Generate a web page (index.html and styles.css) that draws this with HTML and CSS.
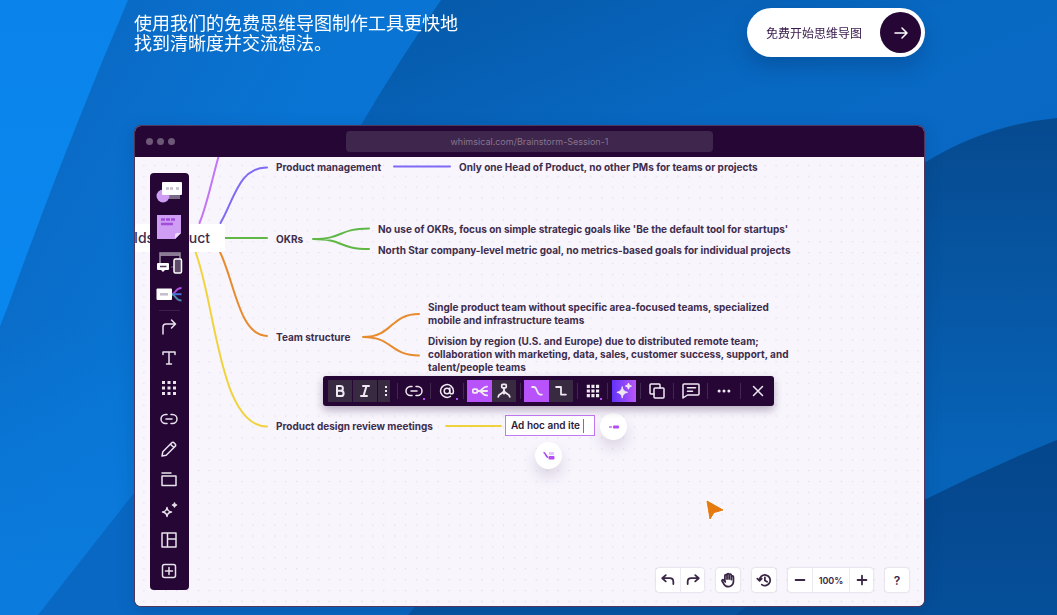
FILE: index.html
```html
<!DOCTYPE html>
<html lang="zh-CN">
<head>
<meta charset="utf-8">
<meta name="viewport" content="width=device-width, initial-scale=1">
<title>免费思维导图</title>
<link rel="stylesheet" href="styles.css">
</head>
<body>
<svg class="backdrop" viewBox="0 0 1057 615" preserveAspectRatio="none" aria-hidden="true">
  <defs>
    <linearGradient id="g1" x1="0" y1="0" x2="0" y2="1"><stop offset="0" stop-color="#0a84ea"/><stop offset="1" stop-color="#0a8af4"/></linearGradient>
    <linearGradient id="g2" gradientUnits="userSpaceOnUse" x1="90" y1="80" x2="260" y2="180"><stop offset="0" stop-color="#0a6bc6"/><stop offset="1" stop-color="#0974d3"/></linearGradient>
    <linearGradient id="g2b" gradientUnits="userSpaceOnUse" x1="0" y1="320" x2="0" y2="615"><stop offset="0" stop-color="#0a7bdc" stop-opacity="0"/><stop offset="1" stop-color="#0b7cde"/></linearGradient>
    <linearGradient id="g3" gradientUnits="userSpaceOnUse" x1="480" y1="0" x2="620" y2="330"><stop offset="0" stop-color="#065bac"/><stop offset=".55" stop-color="#0869c3"/><stop offset="1" stop-color="#0968c4"/></linearGradient>
    <linearGradient id="g4" gradientUnits="userSpaceOnUse" x1="0" y1="118" x2="0" y2="460"><stop offset="0" stop-color="#064a8f"/><stop offset="1" stop-color="#0763b8"/></linearGradient>
    <linearGradient id="g5" gradientUnits="userSpaceOnUse" x1="0" y1="440" x2="0" y2="615"><stop offset="0" stop-color="#05468b"/><stop offset="1" stop-color="#054f9a"/></linearGradient>
  </defs>
  <rect width="1057" height="615" fill="url(#g1)"/>
  <path d="M128 0Q64 150 8 306L0 326V615H1057V0z" fill="url(#g2)"/>
  <path d="M8 306L0 326V615H420V306z" fill="url(#g2b)"/>
  <path d="M441 0Q398 62 361 125Q240 360 134 493L38 615H1057V0z" fill="url(#g3)"/>
  <path d="M418 603L408 615H800V603z" fill="#0857a5"/>
  <path d="M924 163Q985 125 1057 118V615H860V210z" fill="url(#g4)"/>
  <path d="M735 615Q830 545 924 500Q990 467 1057 440V615z" fill="url(#g5)"/>
</svg>

<main class="page">
  <header class="intro">
    <p class="lead">使用我们的免费思维导图制作工具更快地<br>找到清晰度并交流想法。</p>
    <a class="cta" href="#start">
      <span>免费开始思维导图</span>
      <span class="cta-arrow"><svg viewBox="0 0 14 14" width="14" height="14" aria-hidden="true"><path d="M1 7h12M8 2l5 5-5 5" fill="none" stroke="#fff" stroke-width="1.5" stroke-linecap="round" stroke-linejoin="round"/></svg></span>
    </a>
  </header>

  <section class="window" aria-label="Brainstorm session">
    <div class="titlebar">
      <div class="lights"><i></i><i></i><i></i></div>
      <div class="address">whimsical.com/Brainstorm-Session-1</div>
    </div>

    <div class="canvas">
      <svg class="wires" width="789" height="449" viewBox="135 157 789 449" aria-hidden="true">
        <defs><pattern id="dots" patternUnits="userSpaceOnUse" x="143.3" y="164.8" width="10.9" height="10.9"><circle cx=".7" cy=".7" r=".6" fill="#d9d5e0"/></pattern></defs>
        <rect x="135" y="157" width="789" height="449" fill="url(#dots)"/>
        <g fill="none" stroke-width="2" stroke-linecap="round">
          <path stroke="#c275f5" d="M219 155C212 179 207 205 199.500 223"/>
          <path stroke="#7e6bf5" d="M220.500 223C234 200 239 167 267 167.500M394 166.500H450"/>
          <path stroke="#5fb846" d="M225 238H267M313 239C344 239 338 228.500 369 228.500M313 239C344 239 338 249 369 249"/>
          <path stroke="#e88b2c" d="M220 252C235 283 239 335 267 336M363 337C393 337 390 314 419 314M363 337C393 337 390 355.500 419 355.500"/>
          <path stroke="#f0d33c" d="M195.500 252C216 306 219 426 267 426.500M446 426H501"/>
        </g>
      </svg>

      <div class="node root">lds product</div>
      <div class="node n-pm">Product management</div>
      <div class="node n-head">Only one Head of Product, no other PMs for teams or projects</div>
      <div class="node n-okr">OKRs</div>
      <div class="node n-use">No use of OKRs, focus on simple strategic goals like 'Be the default tool for startups'</div>
      <div class="node n-north">North Star company-level metric goal, no metrics-based goals for individual projects</div>
      <div class="node n-team">Team structure</div>
      <div class="node n-single">Single product team without specific area-focused teams, specialized<br>mobile and infrastructure teams</div>
      <div class="node n-division">Division by region (U.S. and Europe) due to distributed remote team;<br>collaboration with marketing, data, sales, customer success, support, and<br>talent/people teams</div>
      <div class="node n-review">Product design review meetings</div>
      <div class="editing"><input type="text" value="Ad hoc and ite" aria-label="Node text"><i class="caret"></i></div>
      <button class="bubble add-child" aria-label="Add child"><svg viewBox="0 0 12 6" width="12" height="6"><path d="M1 3h3" stroke="#c26bf7" stroke-width="1.500"/><rect x="5" y="1.500" width="6" height="3" rx="1" fill="#b44df0"/></svg></button>
      <button class="bubble add-sibling" aria-label="Add sibling"><svg viewBox="0 0 12 10" width="12" height="10"><path d="M.5 1.500C3 1.500 2.500 6 5 6.500" fill="none" stroke="#a63df0" stroke-width="1.500"/><rect x="6" y="1" width="5" height="3" fill="#e5c4fb"/><rect x="5.500" y="5" width="6" height="3.500" rx="1" fill="#b44df0"/></svg></button>

      <nav class="tools" aria-label="Tools">
        <button class="tool big" aria-label="Shapes"><svg viewBox="0 0 28 24" width="28" height="24"><rect x="13" y="15" width="12" height="4" fill="#7b6a86"/><circle cx="8" cy="16" r="6.500" fill="#cf9df3"/><rect x="7" y="2" width="20" height="13" rx="1" fill="#fff"/><path d="M11 8.500h8M21 8.500h3" stroke="#c4bdca" stroke-width="2.500" stroke-dasharray="3 1"/></svg></button>
        <button class="tool big" aria-label="Sticky note"><svg viewBox="0 0 26 26" width="26" height="26"><path d="M1 1h24v18l-6 6H1z" fill="#cf9df3"/><path d="M19 25v-4q0-2 2-2h4z" fill="#eedcfc"/><path d="M5 5.500h4M10 5.500h4M15 5.500h4M5 10h12" stroke="#a24ddb" stroke-width="2.500"/></svg></button>
        <button class="tool mid" aria-label="Wireframe"><svg viewBox="0 0 28 24" width="28" height="24"><path d="M5 14V2h20v7M5 4h20" fill="none" stroke="#9c8ea5" stroke-width="1.500"/><path d="M6 3.500h18" stroke="#8a7a94" stroke-width="3"/><path d="M16 16h4" stroke="#7b6a86"/><rect x="19" y="8" width="7.500" height="14" rx="1.500" fill="#5d4b69" stroke="#fff" stroke-width="1.500"/><path d="M3 12h10a1 1 0 0 1 1 1v5a1 1 0 0 1-1 1h-3l-2 2-2-2H3a1 1 0 0 1-1-1v-5a1 1 0 0 1 1-1z" fill="#fff"/><path d="M5 15.500h6.500" stroke="#4e3a5a" stroke-width="1.500"/></svg></button>
        <button class="tool low" aria-label="Mind map"><svg viewBox="0 0 28 18" width="28" height="18"><rect x="1.500" y="3.500" width="15.500" height="11.500" rx="1" fill="#fff"/><path d="M5 9.300h8" stroke="#c4bdca" stroke-width="2.500"/><path d="M17 9C21 9 20 3 26.500 3" fill="none" stroke="#a94ee0" stroke-width="2"/><path d="M17 9.200h9.500" stroke="#4a6fd8" stroke-width="2"/><path d="M17 9.500C21 9.500 20 15.500 26.500 15.500" fill="none" stroke="#4b89ad" stroke-width="2"/></svg></button>
        <hr>
        <button class="tool" aria-label="Connector"><svg class="ico" viewBox="0 0 18 18"><path d="M3 16V9q0-3 3-3h9.500M11.500 2l4 4-4 4"/></svg></button>
        <button class="tool" aria-label="Text"><svg class="ico" viewBox="0 0 18 18"><path d="M3 5.500V3h12v2.500M9 3v12M6.500 15h5"/></svg></button>
        <button class="tool" aria-label="Grid"><svg class="solid" viewBox="0 0 18 18"><path d="M2 2h3v3H2zM7.500 2h3v3h-3zM13 2h3v3h-3zM2 7.500h3v3H2zM7.500 7.500h3v3h-3zM13 7.500h3v3h-3zM2 13h3v3H2zM7.500 13h3v3h-3zM13 13h3v3h-3z"/></svg></button>
        <button class="tool" aria-label="Link"><svg class="ico" viewBox="0 0 18 18"><path d="M7 4.500H5.500a4.500 4.500 0 0 0 0 9H7M11 4.500h1.500a4.500 4.500 0 0 1 0 9H11M6 9h6"/></svg></button>
        <button class="tool" aria-label="Pen"><svg class="ico" viewBox="0 0 18 18"><path d="M2 16l.8-4.200L11.500 3a2 2 0 0 1 2.800 0l.7.700a2 2 0 0 1 0 2.800l-8.800 8.700zM10.500 4.200l3.300 3.300"/></svg></button>
        <button class="tool" aria-label="Frame"><svg class="ico" viewBox="0 0 18 18"><path d="M2 6h14v9.500H2zM2 3h9" /></svg></button>
        <button class="tool" aria-label="AI"><svg class="ico" viewBox="0 0 18 18"><path d="M7 6.500Q7.500 10.500 11.500 11Q7.500 11.500 7 15.500Q6.500 11.500 2.500 11Q6.500 10.500 7 6.500zM14.500 2Q14.700 3.800 16.500 4Q14.700 4.200 14.500 6Q14.300 4.200 12.500 4Q14.300 3.800 14.500 2z"/></svg></button>
        <button class="tool" aria-label="Templates"><svg class="ico" viewBox="0 0 18 18"><path d="M2 2h14v14H2zM7.500 2v14M7.500 8H16"/></svg></button>
        <button class="tool" aria-label="More"><svg class="ico" viewBox="0 0 18 18"><rect x="2.500" y="2.500" width="13" height="13" rx="2"/><path d="M9 5.500v7M5.500 9h7"/></svg></button>
      </nav>

      <div class="format" role="toolbar" aria-label="Format">
        <button class="chip" aria-label="Bold"><svg class="ico" viewBox="0 0 16 16"><path d="M5 3h3.500a2.400 2.400 0 0 1 0 4.800H5zM5 7.800h4a2.600 2.600 0 0 1 0 5.200H5z"/></svg></button>
        <button class="chip split" aria-label="Italic"><svg class="ico" viewBox="0 0 16 16"><path d="M6 3h6M4 13h6M9.500 3l-3 10"/></svg></button>
        <button class="chip slim split" aria-label="More text styles"><svg class="solid" viewBox="0 0 16 16"><path d="M7 3h2v2H7zM7 7h2v2H7zM7 11h2v2H7z"/></svg></button>
        <i class="sep far"></i>
        <button class="cell" aria-label="Link"><svg class="ico" viewBox="0 0 18 18"><path d="M7 4.500H5.500a4.500 4.500 0 0 0 0 9H7M11 4.500h1.500a4.500 4.500 0 0 1 0 9H11M6 9h6"/></svg><b></b></button>
        <i class="sep"></i>
        <button class="cell" aria-label="Mention"><svg class="ico" viewBox="0 0 18 18"><circle cx="9" cy="9" r="2.800"/><path d="M11.800 6v4a1.800 1.800 0 0 0 3.600 0V9a6.400 6.400 0 1 0-3 5.400"/></svg><b></b></button>
        <i class="sep"></i>
        <button class="chip on near" aria-label="Horizontal layout"><svg class="ico" viewBox="0 0 18 18"><rect x="1" y="7" width="5" height="4" rx="1"/><path d="M6 9h11M8 9C12 9 11 4 17 4M8 9c4 0 3 5 9 5"/></svg></button>
        <button class="chip" aria-label="Vertical layout"><svg class="ico" viewBox="0 0 18 18"><rect x="6.500" y="1.500" width="5" height="4" rx="1"/><path d="M9 5.500V12M2.500 15.500C3 11 9 13 9 8C9 13 15 11 15.500 15.500"/></svg></button>
        <i class="sep wide"></i>
        <button class="chip on" aria-label="Curved line"><svg class="ico" viewBox="0 0 18 18"><path d="M3.500 4.500h2C9.500 4.500 8.500 13 12.500 13h2"/></svg></button>
        <button class="chip" aria-label="Elbow line"><svg class="ico" viewBox="0 0 18 18"><path d="M3.500 4.500H9V13h5.500"/></svg></button>
        <i class="sep before"></i>
        <button class="cell small" aria-label="Grid"><svg class="solid" viewBox="0 0 18 18"><path d="M2 2h3.500v3.500H2zM7.200 2h3.500v3.500H7.200zM12.400 2h3.500v3.500h-3.500zM2 7.200h3.500v3.500H2zM7.200 7.200h3.500v3.500H7.200zM12.400 7.200h3.500v3.500h-3.500zM2 12.400h3.500v3.500H2zM7.200 12.400h3.500v3.500H7.200zM12.400 12.400h3.500v3.500h-3.500z"/></svg><b></b></button>
        <i class="sep after"></i>
        <button class="chip ai" aria-label="AI"><svg class="solid" viewBox="0 0 18 18"><path d="M7 4Q7.500 9.500 13 10.500Q7.500 11.500 7 17Q6.500 11.500 1 10.500Q6.500 9.500 7 4zM14 0Q14.300 3 17.500 3.500Q14.300 4 14 7Q13.700 4 10.500 3.500Q13.700 3 14 0z" stroke="currentColor"/></svg></button>
        <i class="sep before"></i>
        <button class="cell" aria-label="Duplicate"><svg class="ico" viewBox="0 0 18 18"><rect x="6" y="6" width="10" height="10" rx="1"/><path d="M12 6V3a1 1 0 0 0-1-1H3a1 1 0 0 0-1 1v8a1 1 0 0 0 1 1h3"/></svg></button>
        <i class="sep"></i>
        <button class="cell wide" aria-label="Comment"><svg class="ico" viewBox="0 0 18 18"><path d="M2 2h14a1 1 0 0 1 1 1v9a1 1 0 0 1-1 1H5.500L1 16V3a1 1 0 0 1 1-1zM5.500 5.800h8M5.500 9.300h5"/></svg></button>
        <i class="sep"></i>
        <button class="cell" aria-label="More"><svg class="solid" viewBox="0 0 18 18"><circle cx="3.500" cy="9" r="1.700"/><circle cx="9" cy="9" r="1.700"/><circle cx="14.500" cy="9" r="1.700"/></svg></button>
        <i class="sep"></i>
        <button class="cell wide" aria-label="Close"><svg class="ico" viewBox="0 0 18 18"><path d="M4.500 4.500l9 9M13.500 4.500l-9 9"/></svg></button>
      </div>

      <svg class="pointer" viewBox="0 0 20 22" width="20" height="22" aria-hidden="true"><path d="M2 2l16 9-9 2.500L5 20z" fill="#e67e14" stroke="#fff" stroke-width="3" stroke-linejoin="round" stroke-opacity=".6"/><path d="M2 2l16 9-9 2.500L5 20z" fill="#e67a0e" stroke="#e67a0e" stroke-linejoin="round"/></svg>

      <div class="controls">
        <div class="group"><button aria-label="Undo"><svg class="ico" viewBox="0 0 18 18"><path d="M6.500 3.500l-4 3.500 4 3.500M3 7h8q4 0 4 4v2.500"/></svg></button><button aria-label="Redo"><svg class="ico" viewBox="0 0 18 18"><path d="M11.500 3.500l4 3.500-4 3.500M15 7H7q-4 0-4 4v2.500"/></svg></button></div>
        <div class="group"><button aria-label="Pan"><svg class="ico" viewBox="0 0 18 18"><path d="M5.500 10V4.200a1.200 1.200 0 0 1 2.400 0V8M7.900 8V3a1.200 1.200 0 0 1 2.400 0v5M10.300 8V3.600a1.200 1.200 0 0 1 2.400 0V8.500M12.700 8.500V5.500a1.200 1.200 0 0 1 2.400 0V11a5.500 5.500 0 0 1-5.500 5.500C6.500 16.500 5 15 4 13L2.300 10.200c-.5-1 .8-2 1.700-1.200L6 11.200"/></svg></button></div>
        <div class="group"><button aria-label="History"><svg class="ico" viewBox="0 0 18 18"><path d="M4 9.500A6 6 0 1 1 6.500 14.200M1.500 7.500L4 10l2.500-2.500M10 6v3.500l2.500 1.500"/></svg></button></div>
        <div class="group"><button aria-label="Zoom out"><svg class="ico" viewBox="0 0 18 18"><path d="M4 9h10"/></svg></button><button class="level">100%</button><button aria-label="Zoom in"><svg class="ico" viewBox="0 0 18 18"><path d="M4 9h10M9 4v10"/></svg></button></div>
        <div class="group"><button class="help">?</button></div>
      </div>
    </div>
  </section>
</main>
</body>
</html>
```
FILE: styles.css
```css
* { box-sizing: border-box; }
html { height: 100%; overflow: hidden; }
body {
  margin: 0;
  min-height: 100%;
  font-family: Inter, "Noto Sans CJK SC", sans-serif;
  color: #2d1a3a;
  background: #0968c4;
}
button { border: 0; padding: 0; background: none; color: inherit; font: inherit; }
.backdrop { position: fixed; inset: 0; width: 100%; height: 100%; }
.page { position: relative; padding: 8px 132px 8px 134px; }

.intro { display: flex; justify-content: space-between; align-items: flex-start; height: 117px; }
.lead { margin: 4px 0 0; color: #fff; font: 400 18px/20px "Noto Sans CJK SC", sans-serif; }
.cta {
  display: flex; align-items: center; gap: 18px; height: 49px;
  padding: 0 4px 0 19px; border-radius: 25px; background: #fff; color: #36184a;
  font: 400 12px/18px "Noto Sans CJK SC", sans-serif; text-decoration: none;
  box-shadow: 0 10px 20px #06346a50;
}
.cta-arrow { display: grid; place-items: center; width: 41px; height: 41px; border-radius: 50%; background: #250634; }

.window {
  border: 1px solid #250634cc; border-radius: 7px; overflow: hidden;
  box-shadow: 0 4px 16px #04346a40; background: #f8f5fd;
}
.titlebar {
  display: grid; grid-template-columns: 1fr 367px 1fr; align-items: center;
  height: 31px; background: #250634;
}
.lights { display: flex; gap: 4px; padding-left: 11px; }
.lights i { width: 7px; height: 7px; border-radius: 50%; background: #6e5878; }
.address { height: 21px; border-radius: 4px; background: #3e264c; color: #87758f; font-size: 9px; line-height: 21px; text-align: center; }

.canvas { position: relative; height: 449px; overflow: hidden; background: #f8f5fd; }
.wires { position: absolute; left: 0; top: 0; }
.node { position: absolute; font-size: 10px; line-height: 13px; font-weight: 700; white-space: nowrap; color: #3f2d4c; }
.root { left: 0; top: 67px; width: 90px; display: flex; justify-content: flex-end; padding-right: 15px; background: #fff; border-radius: 3px; font-size: 14px; line-height: 28px; font-weight: 500; }
.n-pm { left: 141px; top: 4px; }
.n-head { left: 324px; top: 4px; }
.n-okr { left: 141px; top: 76px; }
.n-use { left: 243px; top: 66px; }
.n-north { left: 243px; top: 87px; }
.n-team { left: 141px; top: 174px; }
.n-single { left: 293px; top: 144px; }
.n-division { left: 293px; top: 178px; }
.n-review { left: 141px; top: 263px; }
.editing { position: absolute; left: 370px; top: 258px; width: 90px; height: 21px; display: flex; align-items: center; padding-left: 5px; background: #fff; border: 1px solid #c27af4; }
.editing input { width: 72px; padding: 0; border: 0; outline: 0; background: none; color: #2d1a3a; font: 600 10px/13px Inter, sans-serif; }
.caret { width: 1px; height: 14px; background: #7a62f5; }
.bubble { position: absolute; display: grid; place-items: center; width: 27px; height: 27px; border-radius: 50%; background: #fff; box-shadow: 0 8px 14px #3b1d5225; }
.add-child { left: 465px; top: 256px; }
.add-sibling { left: 400px; top: 285px; }
.pointer { position: absolute; left: 570px; top: 342px; }

.ico { width: 18px; height: 18px; fill: none; stroke: currentColor; stroke-width: 1.5px; stroke-linecap: round; stroke-linejoin: round; }
.solid { width: 18px; height: 18px; fill: currentColor; }

.tools { position: absolute; left: 15px; top: 16px; bottom: 16px; width: 39px; display: flex; flex-direction: column; padding: 2px 1px 4px 0; border-radius: 4px; background: #250634; color: #e8e2ec; }
.tool { flex: 1; display: grid; place-items: center; }
.tool.big, .tool.mid, .tool.low { flex: none; height: 37px; }
.tool.big:first-child { height: 33px; }
.tool.mid { height: 36px; }
.tool.low { height: 26px; }
.tools hr { width: 21px; height: 1px; margin: 3px auto 1px; border: 0; background: #3b204a; }

.format { position: absolute; left: 188px; top: 219px; height: 30px; display: flex; align-items: center; padding: 0 0 0 5px; border-radius: 3px; background: #250634; color: #efeaf2; box-shadow: 0 4px 9px #2506344d; }
.chip { display: grid; place-items: center; width: 24px; height: 22px; background: #382a41; }
.chip .ico, .chip .solid, .cell .solid { width: 16px; height: 16px; stroke-width: 2px; }
.cell .ico { width: 18px; height: 18px; stroke-width: 1.5px; }
.chip .solid, .cell .solid { stroke-width: 0; }
.chip.split { width: 25px; border-left: 1px solid #250634; }
.chip.slim { width: 13px; }
.chip.on { width: 25px; background: #b852fa; }
.chip.near { margin-left: 3px; }
.chip.ai { background: linear-gradient(90deg, #6133fa, #bb57fa); }
.chip.ai .solid { stroke-width: 1px; }
.sep { width: 1px; height: 16px; background: #412850; }
.sep.far { margin-left: 7px; }
.sep.wide { margin: 0 3px 0 4px; }
.sep.before { margin-left: 4px; }
.sep.after { margin-right: 4px; }
.cell { position: relative; display: grid; place-items: center; width: 32px; height: 22px; }
.cell.small { width: 29px; }
.cell.wide { width: 33px; }
.cell b { position: absolute; right: 5px; bottom: 2px; width: 2px; height: 2px; background: #b24df5; }

.controls { position: absolute; right: 15px; bottom: 14px; display: flex; gap: 12px; }
.group { display: flex; background: #fff; border-radius: 3px; box-shadow: 0 0 2px #2506343d; }
.group button { display: grid; place-items: center; width: 24px; height: 24px; color: #3a2747; }
.group button + button { border-left: 1px solid #eee9f3; }
.group .ico { width: 16px; height: 16px; stroke-width: 2px; }
.group .level { width: 37px; font-size: 9px; font-weight: 600; }
.group .help { font-size: 12px; font-weight: 600; }
```
